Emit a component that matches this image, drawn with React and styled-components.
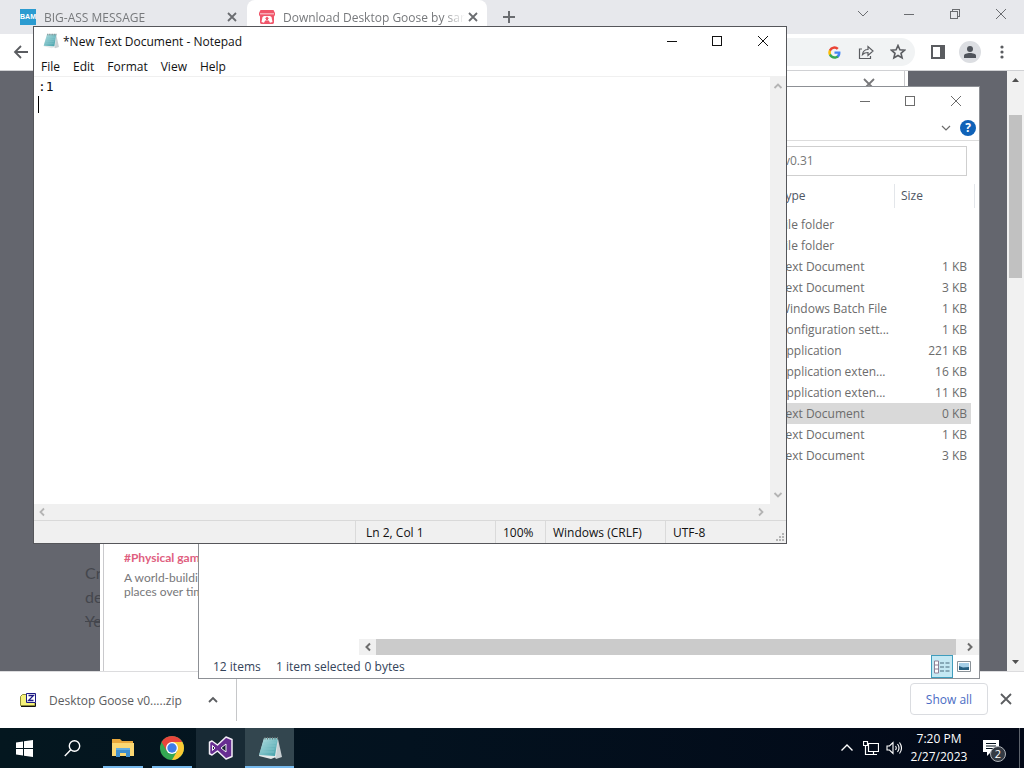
import React from "react";
import styled, { createGlobalStyle } from "styled-components";

const GlobalStyle = createGlobalStyle`
  *, *::before, *::after { box-sizing: border-box; }
  body { margin: 0; font-family: "Open Sans", "Noto Sans", sans-serif; font-size: 12px; color: #111; }
  button { font: inherit; color: inherit; background: none; border: 0; padding: 0; cursor: default; }
  svg { display: block; flex: none; }
`;

const Desktop = styled.div`
  position: relative;
  display: flex;
  flex-direction: column;
  min-height: 100vh;
  overflow: hidden;
  background: #fff;
`;

/* ---------- Browser ---------- */

const TabStrip = styled.header`
  display: flex;
  height: 34px;
  background: #e7e8ec;
  color: #6a6c70;
`;

const Tab = styled.div`
  display: flex;
  align-items: center;
  width: 240px;
  height: 34px;
  padding: 0 8px 0 12px;
  border-radius: 8px 8px 0 0;
  background: ${(p) => (p.$active ? "#fff" : "transparent")};
  &:first-child { margin-left: 8px; margin-right: -1px; }
`;

const TabTitle = styled.span`
  flex: 1;
  margin-left: 8px;
  white-space: nowrap;
  color: #77797c;
  mask-image: linear-gradient(to right, #000 88%, transparent);
`;

const BamIcon = styled.span`
  width: 16px;
  height: 16px;
  background: #2b9bd0;
  color: #fff;
  font: bold 7px/16px "Liberation Sans", sans-serif;
  text-align: center;
`;

const IconButton = styled.button`
  display: grid;
  place-items: center;
  flex: none;
  width: ${(p) => p.$w || 16}px;
  height: ${(p) => p.$h || 16}px;
`;

const Spacer = styled.div`
  flex: 1;
`;

const WindowControls = styled.div`
  display: flex;
  height: 30px;
`;

const Toolbar = styled.div`
  display: flex;
  align-items: center;
  height: 36px;
  padding: 0 6px 0 13px;
  background: #fff;
  color: #5a5c60;
`;

const Omnibox = styled.div`
  display: flex;
  align-items: center;
  justify-content: flex-end;
  flex: 1;
  height: 28px;
  margin: 0 7px 0 70px;
  padding-right: 1px;
  border-radius: 14px;
  background: #f1f3f4;
`;

const Avatar = styled.span`
  display: grid;
  place-items: center;
  width: 22px;
  height: 22px;
  border-radius: 50%;
  background: #dcdee2;
`;

const Viewport = styled.main`
  position: relative;
  display: flex;
  flex: 1;
  border-top: 1px solid #d0d1d4;
`;

const DimmedPage = styled.div`
  flex: 1;
  display: flex;
  flex-direction: column;
  justify-content: flex-end;
  padding: 0 0 38px 85px;
  background: #64666e;
  color: #44464d;
  font: 16px/24px Lato, sans-serif;
  p { margin: 0; }
`;

const Lightbox = styled.section`
  position: absolute;
  inset: 0 116px 0 100px;
  padding: 0 3px;
  background: #fff;
`;

const LightboxBody = styled.div`
  display: flex;
  flex-direction: column;
  height: 100%;
  padding: 5px 27px 72px 20px;
  border: solid #c9c9cc;
  border-width: 0 1px;
  color: #77777a;
  font: 12px/14px Lato, sans-serif;
  > button { align-self: flex-end; }
  p { margin: 0; }
`;

const TagLink = styled.a`
  margin-bottom: 6px;
  color: #e0607f;
  font-weight: bold;
  text-decoration: none;
`;

const PageScrollbar = styled.div`
  display: flex;
  flex-direction: column;
  align-items: center;
  width: 17px;
  background: #f1f1f1;
`;

const PageThumb = styled.div`
  width: 13px;
  height: 163px;
  margin-top: 27px;
  background: #c1c1c1;
`;

const DownloadBar = styled.footer`
  display: flex;
  align-items: center;
  height: 57px;
  padding: 0 10px 2px 20px;
  border-top: 1px solid #dcdcde;
  background: #fff;
  color: #5b5d60;
`;

const DownloadItem = styled.button`
  display: flex;
  align-items: center;
  gap: 13px;
  height: 42px;
  width: 217px;
  margin-top: 2px;
  padding-right: 17px;
  border-right: 1px solid #c6c7c9;
  span { flex: 1; text-align: left; white-space: nowrap; }
`;

const ShowAll = styled.button`
  width: 78px;
  height: 32px;
  margin-right: 10px;
  border: 1px solid #dadce0;
  border-radius: 4px;
  color: #4a6cc4;
`;

/* ---------- Desktop windows ---------- */

const ExplorerWindow = styled.section`
  position: absolute;
  inset: 86px 44px 89px 198px;
  display: flex;
  flex-direction: column;
  overflow: hidden;
  border: 1px solid #8d9095;
  background: #fff;
  color: #6c6c6c;
`;

const TitleBar = styled.div`
  display: flex;
  align-items: center;
  justify-content: ${(p) => (p.$end ? "flex-end" : "flex-start")};
  height: 30px;
  flex: none;
  padding-bottom: 2px;
`;

const Ribbon = styled.div`
  display: flex;
  align-items: center;
  justify-content: flex-end;
  gap: 6px;
  height: 24px;
  flex: none;
  padding: 0 3px 2px 0;
  border-bottom: 1px solid #dcdcdc;
`;

const HelpBadge = styled.button`
  width: 16px;
  height: 16px;
  border-radius: 50%;
  background: #0f62b8;
  color: #fff;
  font: bold 12px/16px "Open Sans", sans-serif;
`;

const SearchBox = styled.input`
  align-self: flex-end;
  flex: none;
  width: 190px;
  height: 30px;
  margin: 5px 12px 8px 0;
  padding: 0 6px 2px;
  border: 1px solid #cfcfcf;
  color: #777;
  font: inherit;
`;

const FileTable = styled.table`
  align-self: flex-end;
  margin-right: 4px;
  border-spacing: 0;
  th, td { padding: 0 6px; font-weight: normal; text-align: left; white-space: nowrap; }
  th { height: 24px; padding-bottom: 2px; color: #4e5765; border-right: 1px solid #e3e6ea; }
  th:first-child { width: 120px; }
  th:last-child { width: 80px; }
  td { height: 21px; line-height: 20px; }
  td:last-child {
    padding-right: 4px;
    border-right: 4px solid #fff;
    background-clip: padding-box;
    text-align: right;
  }
  tbody::before { content: ""; display: block; height: 6px; }
`;

const FileRow = styled.tr`
  background: ${(p) => (p.$selected ? "#d9d9d9" : "#fff")};
`;

const ExplorerScroll = styled.div`
  display: flex;
  flex: none;
  height: 16px;
  margin-left: 160px;
  background: #f0f0f0;
`;

const ExplorerThumb = styled.div`
  flex: 1;
  background: #cbcbcb;
`;

const ExplorerStatus = styled.div`
  display: flex;
  align-items: center;
  flex: none;
  height: 23px;
  padding: 0 4px 0 14px;
  color: #33435a;
  span { white-space: nowrap; }
  span:first-child { width: 63px; }
  span:nth-child(2) { margin-right: 4px; }
`;

const ViewButton = styled.button`
  display: grid;
  place-items: center;
  width: 22px;
  height: 23px;
  border: 1px solid ${(p) => (p.$on ? "#3f9dbd" : "transparent")};
  background: ${(p) => (p.$on ? "#c4e8f3" : "transparent")};
`;

const NotepadWindow = styled.section`
  position: absolute;
  inset: 26px 237px 224px 33px;
  display: flex;
  flex-direction: column;
  border: 1px solid #55565a;
  background: #fff;
  color: #111;
`;

const AppIconButton = styled(IconButton)`
  padding-left: 4px;
`;

const NotepadTitle = styled.h1`
  flex: 1;
  margin: 0;
  font-size: 12px;
  font-weight: normal;
`;

const MenuBar = styled.nav`
  display: flex;
  flex: none;
  gap: 13px;
  height: 20px;
  padding-left: 7px;
  border-bottom: 1px solid #f0f0f0;
`;

const Editor = styled.div`
  position: relative;
  display: flex;
  flex: 1;
  min-height: 0;
`;

const TextBox = styled.textarea`
  flex: 1;
  padding: 1px 4px;
  border: 0;
  outline: 0;
  resize: none;
  overflow: hidden;
  background: #fff;
  color: #111;
  font: 13px/18px "DejaVu Sans Mono", monospace;
`;

const Caret = styled.i`
  position: absolute;
  left: 4px;
  top: 19px;
  width: 1px;
  height: 17px;
  background: #000;
`;

const VerticalTrack = styled.div`
  display: flex;
  flex-direction: column;
  justify-content: space-between;
  width: 16px;
  background: #f0f0f0;
  color: #b4b4b4;
`;

const HorizontalTrack = styled.div`
  display: flex;
  flex: none;
  justify-content: space-between;
  height: 16px;
  padding-right: 17px;
  background: #f0f0f0;
  color: #b4b4b4;
`;

const StatusBar = styled.footer`
  position: relative;
  display: flex;
  justify-content: flex-end;
  flex: none;
  height: 23px;
  border-top: 1px solid #d9d9d9;
  background: #f0f0f0;
  svg { position: absolute; right: 1px; bottom: 1px; }
`;

const StatusPane = styled.span`
  width: ${(p) => p.$w}px;
  padding-left: ${(p) => p.$pad || 7}px;
  border-left: 1px solid #dadada;
  line-height: 23px;
  white-space: nowrap;
`;

/* ---------- Taskbar ---------- */

const Taskbar = styled.nav`
  display: flex;
  height: 40px;
  background: linear-gradient(to right, #04171f, #03121f 40%, #020817);
  color: #fff;
`;

const TaskButton = styled.button`
  display: grid;
  place-items: center;
  width: 49px;
  height: 40px;
  background: ${(p) => p.$bg || "transparent"};
  box-shadow: ${(p) => (p.$wide ? "inset 0 -2px #76b9ed" : "none")};
  background-image: ${(p) => (p.$open ? "linear-gradient(#76b9ed, #76b9ed)" : "none")};
  background-size: 40px 2px;
  background-position: bottom center;
  background-repeat: no-repeat;
`;

const Clock = styled.time`
  width: 68px;
  padding-top: 2px;
  line-height: 18px;
  text-align: center;
`;

const Notifications = styled.button`
  position: relative;
  display: grid;
  place-items: center;
  width: 36px;
  span {
    position: absolute;
    left: 17px;
    top: 18px;
    width: 16px;
    height: 16px;
    border: 1px solid #aeb2b8;
    border-radius: 50%;
    background: #343a43;
    font-size: 11px;
    line-height: 14px;
  }
`;

const ShowDesktop = styled.div`
  width: 5px;
  margin-left: 10px;
  border-left: 1px solid #5d636c;
`;

/* ---------- Icons ---------- */

const Line = ({ w = 16, h = 16, d, sw = 1, crisp, ...rest }) => (
  <svg width={w} height={h} viewBox={`0 0 ${w} ${h}`} fill="none" stroke="currentColor" strokeWidth={sw}
    shapeRendering={crisp ? "crispEdges" : undefined} {...rest}>
    <path d={d} />
  </svg>
);

const Close = () => <Line d="M4 4l8 8M12 4l-8 8" sw={1.8} />;
const Minimise = () => <Line d="M3 8.5h10" crisp />;
const Maximise = () => <Line d="M3.5 3.5h9v9h-9z" crisp />;
const CloseThin = () => <Line d="M3 3l10 10M13 3L3 13" />;

const ItchIcon = () => (
  <svg width="16" height="16" viewBox="0 0 16 16">
    <path fill="#f0566a" d="M1.500 1h13L16 4v2l-1 1.500V13c0 1-.5 2-1.500 2h-11C1.500 15 1 14 1 13V7.500L0 6V4z" />
    <path fill="#fff" d="M1 4.500h14v.8H1zM5 7h6l1.500 1 1 5-2.500.8-1.200-2.300H6.200L5 13.800 2.500 13l1-5z" />
    <path fill="#f0566a" d="M8 7.500l2.200 2.300H9v1.400H7V9.800H5.800z" />
  </svg>
);

const GoogleIcon = () => (
  <svg width="13" height="13" viewBox="0 0 24 24">
    <path fill="#4285f4" d="M23 12.300c0-.8-.1-1.500-.2-2.300H12v4.500h6.200a5.300 5.300 0 0 1-2.300 3.500v3h3.700c2.200-2 3.400-5 3.400-8.700z" />
    <path fill="#34a853" d="M12 23.500c3.100 0 5.700-1 7.600-2.800l-3.700-2.900c-1 .7-2.300 1.100-3.900 1.100-3 0-5.500-2-6.400-4.700H1.800v3A11.500 11.500 0 0 0 12 23.500z" />
    <path fill="#fbbc05" d="M5.600 14.200a7 7 0 0 1 0-4.400v-3H1.800a11.500 11.500 0 0 0 0 10.400z" />
    <path fill="#ea4335" d="M12 5.100c1.700 0 3.200.6 4.400 1.700l3.300-3.300A11.500 11.500 0 0 0 1.800 6.800l3.800 3C6.500 7.100 9 5.100 12 5.100z" />
  </svg>
);

const NotepadIcon = ({ size = 16 }) => (
  <svg width={size} height={size} viewBox="0 0 24 24">
    <defs>
      <linearGradient id={`pad${size}`} x1="0" y1="0" x2="1" y2="1">
        <stop offset="0" stopColor="#b9e2e4" />
        <stop offset="1" stopColor="#3d9da6" />
      </linearGradient>
    </defs>
    <path d="M20 3l4 18-6 2-2-3z" fill="#c9d0d3" />
    <path d="M6 3h14l-2 18-5 2L1 20z" fill="#e6eaeb" />
    <path d="M6 2h14l-3 18-16-1z" fill={`url(#pad${size})`} />
    <path d="M6 7h12M5 10h12.500M4.500 13h12M4 16h12" stroke="#8ac9cf" strokeWidth=".7" />
    <path d="M7 1v2.500M9.500 1v2.500M12 1v2.500M14.500 1v2.500M17 1v2.500M19.500 1v2.500" stroke="#6b7779" />
  </svg>
);

const ZipIcon = () => (
  <svg width="16" height="16" viewBox="0 0 16 16">
    <path d="M.5 4.500l2-2h4v2H15v9H.5z" fill="#f5f27a" stroke="#8b8a3a" />
    <path d="M1 14.500h14.500V11" fill="none" stroke="#111" />
    <path d="M6.500 1.500h9v9h-9z" fill="#fff" stroke="#1d1a86" />
    <path d="M8.500 3.500h5l-5 5h5" fill="none" stroke="#1d1a86" strokeWidth="1.300" />
  </svg>
);

const FolderIcon = () => (
  <svg width="22" height="20" viewBox="0 0 22 20">
    <path d="M0 1h8l2 2h11v15H0z" fill="#e9a93c" />
    <path d="M0 5h22v13H0z" fill="#fbd873" />
    <path d="M4 19v-9h14v9h-4v-4H8v4z" fill="#3f8fce" />
    <path d="M4 10h14v2H4z" fill="#63aee2" />
  </svg>
);

const ChromeIcon = () => (
  <svg width="24" height="24" viewBox="0 0 24 24">
    <circle cx="12" cy="12" r="12" fill="#34a853" />
    <path d="M12 12L1.610 6A12 12 0 0 1 22.390 6H12z" fill="#e8453c" />
    <path d="M22.390 6A12 12 0 0 1 12 24l5.200-9L12 6z" fill="#fcc934" />
    <path d="M1.610 6L6.800 15 12 12V6H2z" fill="#e8453c" />
    <circle cx="12" cy="12" r="6" fill="#fff" />
    <circle cx="12" cy="12" r="4.700" fill="#3f7de8" />
  </svg>
);

const VisualStudioIcon = () => (
  <svg width="26" height="24" viewBox="0 0 26 24">
    <path d="M18 1l6 2.500v17L18 23l-8.500-8L4 19l-2.500-1.200V6.200L4 5l5.500 4z" fill="#672d91" stroke="#f3eef7" strokeWidth="1.500" strokeLinejoin="round" />
    <path d="M4.500 9.500v5L7 12zM18 8l-5 4 5 4z" fill="#162530" stroke="#f3eef7" />
  </svg>
);

const files = [
  ["File folder", ""],
  ["File folder", ""],
  ["Text Document", "1 KB"],
  ["Text Document", "3 KB"],
  ["Windows Batch File", "1 KB"],
  ["Configuration sett...", "1 KB"],
  ["Application", "221 KB"],
  ["Application exten...", "16 KB"],
  ["Application exten...", "11 KB"],
  ["Text Document", "0 KB", true],
  ["Text Document", "1 KB"],
  ["Text Document", "3 KB"],
];

function Browser() {
  return (
    <>
      <TabStrip>
        <Tab>
          <BamIcon>BAM</BamIcon>
          <TabTitle>BIG-ASS MESSAGE</TabTitle>
          <IconButton aria-label="Close tab"><Close /></IconButton>
        </Tab>
        <Tab $active>
          <ItchIcon />
          <TabTitle>Download Desktop Goose by sar</TabTitle>
          <IconButton aria-label="Close tab"><Close /></IconButton>
        </Tab>
        <IconButton $w={44} $h={34} aria-label="New tab"><Line d="M8 2v12M2 8h12" sw={2} /></IconButton>
        <Spacer />
        <WindowControls>
          <IconButton $w={46} $h={28} aria-label="Search tabs"><Line d="M3 5l5 5 5-5" /></IconButton>
          <IconButton $w={46} $h={28} aria-label="Minimise"><Minimise /></IconButton>
          <IconButton $w={46} $h={28} aria-label="Restore">
            <Line d="M3.500 5.500h7v7h-7zM5.500 5.500v-2h7v7h-2" crisp />
          </IconButton>
          <IconButton $w={46} $h={28} aria-label="Close"><CloseThin /></IconButton>
        </WindowControls>
      </TabStrip>
      <Toolbar>
        <IconButton aria-label="Back"><Line d="M15 8H2M8 2L2 8l6 6" sw={1.8} /></IconButton>
        <Omnibox>
          <IconButton $w={32} aria-label="Google"><GoogleIcon /></IconButton>
          <IconButton $w={32} aria-label="Share">
            <Line d="M4 5H1.500v9.500h11V12M4.500 10.500C5 7 7 5.500 10 5.500v-3L15 7l-5 4.500v-3c-2.500 0-4 .5-5.500 2z" sw={1.2} />
          </IconButton>
          <IconButton $w={32} aria-label="Bookmark">
            <Line d="M8 1.500l1.900 4.300 4.700.4-3.600 3.100 1.100 4.600L8 11.500l-4.100 2.400L5 9.300 1.400 6.200l4.700-.4z" sw={1.6} />
          </IconButton>
        </Omnibox>
        <IconButton $w={32} aria-label="Side panel">
          <svg width="14" height="14" viewBox="0 0 14 14">
            <path d="M1 1h12v12H1z" fill="none" stroke="currentColor" strokeWidth="2" />
            <path d="M9 1h4v12H9z" fill="currentColor" />
          </svg>
        </IconButton>
        <IconButton $w={32} $h={22} aria-label="Profile">
          <Avatar>
            <svg width="12" height="12" viewBox="0 0 12 12" fill="#50545b">
              <circle cx="6" cy="3" r="3" />
              <path d="M0 12V9.500C0 8 3 7 6 7s6 1 6 2.500V12z" />
            </svg>
          </Avatar>
        </IconButton>
        <IconButton $w={32} aria-label="Menu">
          <svg width="4" height="14" viewBox="0 0 4 14" fill="currentColor">
            <circle cx="2" cy="2" r="1.600" /><circle cx="2" cy="7" r="1.600" /><circle cx="2" cy="12" r="1.600" />
          </svg>
        </IconButton>
      </Toolbar>
      <Viewport>
        <DimmedPage>
          <p>Cr</p>
          <p>de</p>
          <p><s>Ye</s></p>
        </DimmedPage>
        <PageScrollbar>
          <svg width="17" height="17" viewBox="0 0 17 17"><path d="M5 11l3.500-4 3.500 4z" fill="#505050" /></svg>
          <PageThumb />
          <Spacer />
          <svg width="17" height="17" viewBox="0 0 17 17"><path d="M5 6l3.500 4L12 6z" fill="#505050" /></svg>
        </PageScrollbar>
        <Lightbox>
          <LightboxBody>
            <IconButton aria-label="Dismiss"><Line d="M3 3l10 10M13 3L3 13" sw={1.8} /></IconButton>
            <Spacer />
            <TagLink href="#physical">#Physical gam</TagLink>
            <p>A world-buildi</p>
            <p>places over tim</p>
          </LightboxBody>
        </Lightbox>
      </Viewport>
      <DownloadBar>
        <DownloadItem>
          <ZipIcon />
          <span>Desktop Goose v0.....zip</span>
          <Line w={12} h={12} d="M2 8l4-4 4 4" sw={1.8} />
        </DownloadItem>
        <Spacer />
        <ShowAll>Show all</ShowAll>
        <IconButton aria-label="Close downloads"><Line d="M3 3l10 10M13 3L3 13" sw={1.8} /></IconButton>
      </DownloadBar>
    </>
  );
}

function Explorer() {
  return (
    <ExplorerWindow>
      <TitleBar $end>
        <IconButton $w={45} $h={28} aria-label="Minimise"><Minimise /></IconButton>
        <IconButton $w={46} $h={28} aria-label="Maximise"><Maximise /></IconButton>
        <IconButton $w={46} $h={28} aria-label="Close"><CloseThin /></IconButton>
      </TitleBar>
      <Ribbon>
        <IconButton aria-label="Expand ribbon"><Line d="M4 6l4 4 4-4" sw={1.2} /></IconButton>
        <HelpBadge>?</HelpBadge>
      </Ribbon>
      <SearchBox aria-label="Search" defaultValue="v0.31" />
      <FileTable>
        <thead>
          <tr><th>Type</th><th>Size</th></tr>
        </thead>
        <tbody>
          {files.map(([type, size, selected], i) => (
            <FileRow key={i} $selected={selected}><td>{type}</td><td>{size}</td></FileRow>
          ))}
        </tbody>
      </FileTable>
      <Spacer />
      <ExplorerScroll>
        <IconButton $w={17} aria-label="Scroll left"><Line d="M10 4.500L6.500 8l3.500 3.500" sw={2} /></IconButton>
        <ExplorerThumb />
        <IconButton $w={23} aria-label="Scroll right"><Line d="M8 4.500l3.500 3.500L8 11.500" sw={2} /></IconButton>
      </ExplorerScroll>
      <ExplorerStatus>
        <span>12 items</span>
        <span>1 item selected</span>
        <span>0 bytes</span>
        <Spacer />
        <ViewButton $on aria-label="Details">
          <svg width="16" height="14" viewBox="0 0 16 14">
            <path d="M.5 1h4v12h-4zM.5 5h4M.5 9h4" fill="#fff" stroke="#8e7f96" />
            <path d="M6 3h4M11.500 3h4M6 7h4M11.500 7h4M6 11h4M11.500 11h4" stroke="#4b6a7c" />
          </svg>
        </ViewButton>
        <ViewButton aria-label="Large icons">
          <svg width="14" height="11" viewBox="0 0 14 11">
            <path d="M.5.500h13v10H.5z" fill="#fff" stroke="#8a9298" />
            <path d="M2 2h10v7H2z" fill="#a5cfe8" />
            <path d="M2 5l4 1.500 6-.5v3H2z" fill="#265f80" />
          </svg>
        </ViewButton>
      </ExplorerStatus>
    </ExplorerWindow>
  );
}

function Notepad() {
  return (
    <NotepadWindow>
      <TitleBar>
        <AppIconButton $w={29} $h={28} aria-label="Window menu"><NotepadIcon /></AppIconButton>
        <NotepadTitle>*New Text Document - Notepad</NotepadTitle>
        <IconButton $w={45} $h={28} aria-label="Minimise"><Minimise /></IconButton>
        <IconButton $w={46} $h={28} aria-label="Maximise"><Maximise /></IconButton>
        <IconButton $w={46} $h={28} aria-label="Close"><CloseThin /></IconButton>
      </TitleBar>
      <MenuBar>
        <button>File</button>
        <button>Edit</button>
        <button>Format</button>
        <button>View</button>
        <button>Help</button>
      </MenuBar>
      <Editor>
        <TextBox aria-label="Document text" spellCheck={false} defaultValue={":1\n"} />
        <Caret />
        <VerticalTrack>
          <Line d="M4.500 11L8 7.500l3.500 3.500" sw={1.8} />
          <Line d="M4.500 5L8 8.500 11.500 5" sw={1.8} />
        </VerticalTrack>
      </Editor>
      <HorizontalTrack>
        <Line d="M10 4.500L6.500 8l3.500 3.500" sw={1.8} />
        <Line d="M6 4.500L9.500 8 6 11.500" sw={1.8} />
      </HorizontalTrack>
      <StatusBar>
        <StatusPane $w={140} $pad={10}>Ln 2, Col 1</StatusPane>
        <StatusPane $w={50}>100%</StatusPane>
        <StatusPane $w={120}>Windows (CRLF)</StatusPane>
        <StatusPane $w={121}>UTF-8</StatusPane>
        <svg width="10" height="10" viewBox="0 0 10 10" fill="#b4b4b4">
          <path d="M7 1h2v2H7zM4 4h2v2H4zM7 4h2v2H7zM1 7h2v2H1zM4 7h2v2H4zM7 7h2v2H7z" />
        </svg>
      </StatusBar>
    </NotepadWindow>
  );
}

function SystemTaskbar() {
  return (
    <Taskbar>
      <TaskButton aria-label="Start">
        <svg width="17" height="17" viewBox="0 0 17 17" fill="#fff">
          <path d="M0 2.500l7-1V8H0zM8 1.300L17 0v8H8zM0 9h7v6.500l-7-1zM8 9h9v8l-9-1.300z" />
        </svg>
      </TaskButton>
      <TaskButton aria-label="Search">
        <svg width="19" height="17" viewBox="0 0 19 17" fill="none" stroke="#fff" strokeWidth="1.400">
          <circle cx="10.500" cy="6" r="5.200" /><path d="M6.800 9.800L.8 16" />
        </svg>
      </TaskButton>
      <TaskButton $open aria-label="File Explorer"><FolderIcon /></TaskButton>
      <TaskButton $open aria-label="Chrome"><ChromeIcon /></TaskButton>
      <TaskButton $bg="#182a35" aria-label="Visual Studio"><VisualStudioIcon /></TaskButton>
      <TaskButton $bg="#33464f" $wide aria-label="Notepad"><NotepadIcon size={24} /></TaskButton>
      <Spacer />
      <IconButton $w={24} $h={40} aria-label="Hidden icons"><Line d="M2.500 10.500L8 5l5.500 5.500" sw={1.4} /></IconButton>
      <IconButton $w={24} $h={40} aria-label="Network">
        <Line d="M5.500 3.500h10v8h-10zM.5 1.500h4v4h-4zM2.500 5.500v9h5M10.500 11.500v3M7 14.500h7" sw={1.2} />
      </IconButton>
      <IconButton $w={22} $h={40} aria-label="Volume">
        <Line d="M1 6h2.500L7 2.500v11L3.500 10H1zM9.500 6q1.500 2 0 4M11.500 4q3 4 0 8M13.500 2.500q4 5.500 0 11" sw={1.1} />
      </IconButton>
      <Clock dateTime="2023-02-27T19:20">7:20 PM<br />2/27/2023</Clock>
      <Notifications aria-label="Notifications">
        <svg width="16" height="16" viewBox="0 0 16 16">
          <path d="M0 0h16v12H8l-4 4v-4H0z" fill="#fff" />
          <path d="M3 3.500h10M3 6h10M3 8.500h7" stroke="#03101c" />
        </svg>
        <span>2</span>
      </Notifications>
      <ShowDesktop />
    </Taskbar>
  );
}

export default function App() {
  return (
    <Desktop>
      <GlobalStyle />
      <Browser />
      <SystemTaskbar />
      <Explorer />
      <Notepad />
    </Desktop>
  );
}
